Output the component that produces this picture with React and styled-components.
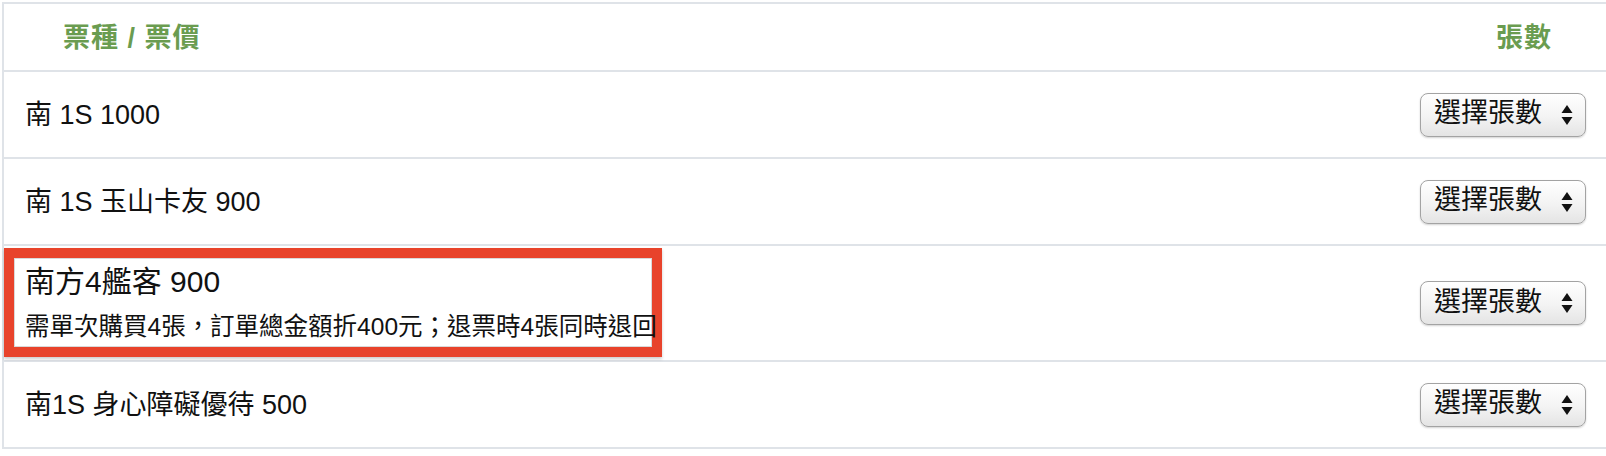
import styled, { createGlobalStyle } from "styled-components";

const GlobalStyle = createGlobalStyle`
  * {
    box-sizing: border-box;
  }
  body {
    margin: 0;
    background: #fff;
    color: #111;
    font-family: "Liberation Sans", "Noto Sans CJK TC", sans-serif;
  }
`;

const Page = styled.div`
  padding: 2px 0 0 2px;
`;

const Table = styled.div`
  border-top: 2px solid #dfe3e8;
  border-left: 2px solid #dfe3e8;
`;

const HeaderRow = styled.div`
  display: flex;
  align-items: center;
  justify-content: space-between;
  height: 68px;
  padding: 0 54px 4px 59px;
  border-bottom: 2px solid #dfe3e8;
`;

const HeaderCell = styled.div`
  font-size: 27px;
  font-weight: 700;
  letter-spacing: 1px;
  color: #6a9c50;
`;

const Row = styled.div`
  display: flex;
  align-items: center;
  justify-content: space-between;
  height: ${(p) => (p.$tall ? 116 : 87)}px;
  padding: 0 20px 0 ${(p) => (p.$highlight ? 0 : 21)}px;
  border-bottom: 2px solid #dfe3e8;
`;

const TicketName = styled.div`
  font-size: ${(p) => (p.$big ? 30 : 27)}px;
  line-height: 36px;
  white-space: nowrap;
`;

const Highlight = styled.div`
  width: 658px;
  height: 109px;
  margin-top: -1px;
  padding: 6px 10px 0 11px;
  border: 10px solid #e8432b;
  box-shadow: inset 0 0 0 1px #d9d9d9, 0 2px 3px rgba(0, 0, 0, 0.2);
`;

const Note = styled.div`
  margin-top: 12px;
  font-size: 24.5px;
  line-height: 30px;
  white-space: nowrap;
`;

const Select = styled.div`
  display: flex;
  align-items: center;
  justify-content: space-between;
  width: 166px;
  height: 44px;
  padding: 0 12px 0 13px;
  border: 1px solid #a3a3a3;
  border-radius: 8px;
  background: linear-gradient(#ffffff, #f3f3f3 55%, #e4e4e4);
  box-shadow: 0 1px 2px rgba(0, 0, 0, 0.18);
  font-size: 27px;
  color: #111;
`;

const SelectLabel = styled.span`
  line-height: 30px;
  margin-top: -3px;
  white-space: nowrap;
`;

function Arrows() {
  return (
    <svg width="12" height="20" viewBox="0 0 12 20">
      <path d="M6 0 L11.5 8 H0.5 Z" fill="#111" />
      <path d="M6 20 L11.5 12 H0.5 Z" fill="#111" />
    </svg>
  );
}

function CountSelect() {
  return (
    <Select>
      <SelectLabel>選擇張數</SelectLabel>
      <Arrows />
    </Select>
  );
}

const tickets = [
  { name: "南 1S 1000" },
  { name: "南 1S 玉山卡友 900" },
  {
    name: "南方4艦客 900",
    note: "需單次購買4張，訂單總金額折400元；退票時4張同時退回",
  },
  { name: "南1S 身心障礙優待 500" },
];

export default function App() {
  return (
    <>
      <GlobalStyle />
      <Page>
        <Table>
          <HeaderRow>
            <HeaderCell>票種 / 票價</HeaderCell>
            <HeaderCell>張數</HeaderCell>
          </HeaderRow>
          {tickets.map((t) =>
            t.note ? (
              <Row key={t.name} $tall $highlight>
                <Highlight>
                  <TicketName $big>{t.name}</TicketName>
                  <Note>{t.note}</Note>
                </Highlight>
                <CountSelect />
              </Row>
            ) : (
              <Row key={t.name}>
                <TicketName>{t.name}</TicketName>
                <CountSelect />
              </Row>
            )
          )}
        </Table>
      </Page>
    </>
  );
}
